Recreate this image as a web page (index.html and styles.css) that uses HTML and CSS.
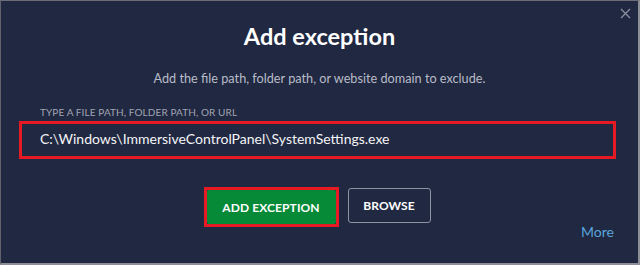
FILE: index.html
```html
<!DOCTYPE html>
<html lang="en">
<head>
<meta charset="utf-8">
<title>Add exception</title>
<link rel="stylesheet" href="styles.css">
</head>
<body>
<div class="dialog">
  <button class="close" aria-label="Close">
    <svg width="11" height="11" viewBox="0 0 11 11"><path d="M1 1L10 10M10 1L1 10" stroke="#8a90a1" stroke-width="1.3" fill="none"/></svg>
  </button>
  <h1 class="title">Add exception</h1>
  <p class="subtitle">Add the file path, folder path, or website domain to exclude.</p>
  <div class="field">
    <label class="label">TYPE A FILE PATH, FOLDER PATH, OR URL</label>
    <div class="input">C:\Windows\ImmersiveControlPanel\SystemSettings.exe</div>
  </div>
  <div class="actions">
    <div class="highlight"><button class="btn btn-primary">ADD EXCEPTION</button></div>
    <button class="btn btn-secondary">BROWSE</button>
  </div>
  <div class="footer"><a class="more">More</a></div>
</div>
</body>
</html>
```
FILE: styles.css
```css
* { box-sizing: border-box; }
html, body { margin: 0; padding: 0; }
body {
  width: 640px;
  height: 265px;
  overflow: hidden;
  font-family: Lato, "Open Sans", sans-serif;
  background: #212841;
}
.dialog {
  position: relative;
  width: 640px;
  height: 265px;
  background: #212841;
  border-top: 1px solid #6a6d75;
  border-left: 1px solid #5f626b;
  border-right: 2px solid #8c8f96;
  border-bottom: 2px solid #8c8f96;
  display: flex;
  flex-direction: column;
  padding-top: 20px;
}
.close {
  position: absolute;
  top: 7px;
  right: 7px;
  width: 11px;
  height: 11px;
  padding: 0;
  border: 0;
  background: none;
  display: flex;
}
.title {
  margin: 0;
  text-align: center;
  color: #ffffff;
  font-size: 23.5px;
  line-height: 30px;
  font-weight: 700;
}
.subtitle {
  margin: 19px 0 0;
  text-align: center;
  color: #b8bcc8;
  font-size: 12.7px;
  line-height: 16px;
}
.field {
  margin: 20px 0 0 18px;
  display: flex;
  flex-direction: column;
}
.label {
  padding-left: 21px;
  color: #a0a5b3;
  font-size: 10px;
  line-height: 13px;
  letter-spacing: 0.1px;
}
.input {
  margin-top: 2px;
  width: 597px;
  height: 38px;
  border: 3px solid #e51a22;
  padding: 5px 0 0 18px;
  color: #f4f5f7;
  font-size: 14px;
  line-height: 20px;
}
.actions {
  margin-top: 28px;
  display: flex;
  justify-content: center;
  align-items: flex-start;
  gap: 9px;
  padding-right: 5px;
}
.highlight {
  border: 3px solid #e51a22;
  display: flex;
}
.btn {
  font-family: Lato, "Open Sans", sans-serif;
  font-weight: 700;
  font-size: 12px;
  color: #ffffff;
  border-radius: 3px;
  height: 34px;
  padding: 0;
  letter-spacing: 0.1px;
}
.btn-primary {
  width: 129px;
  background: #078a38;
  border: 0;
  border-radius: 2px;
}
.btn-secondary {
  margin-top: 1px;
  width: 83px;
  height: 35px;
  background: transparent;
  border: 1px solid #8e93a3;
}
.footer {
  margin-top: -4px;
  display: flex;
  justify-content: flex-end;
  padding-right: 24px;
}
.more {
  color: #5aa5dd;
  font-size: 14px;
  line-height: 17px;
}
```
